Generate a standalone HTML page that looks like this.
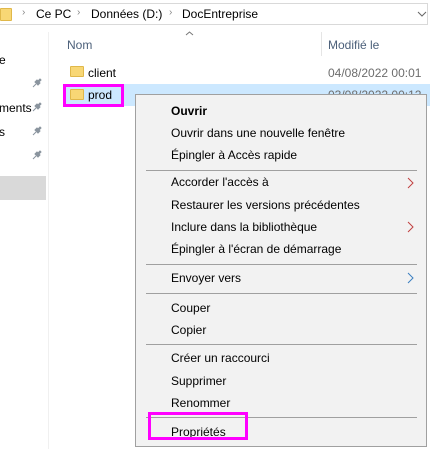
<!DOCTYPE html>
<html><head><meta charset="utf-8"><style>
*{margin:0;padding:0;box-sizing:border-box}
body{width:430px;height:449px;background:#fff;font-family:"Liberation Sans",sans-serif;font-size:12px;color:#000;position:relative;overflow:hidden}
.a{position:absolute;white-space:nowrap}
.fold{position:absolute;width:14px;height:11px;background:#f8d775;border:1px solid #e0b84a;border-radius:1px}
.menu{position:absolute;left:135px;top:94px;width:292px;height:353px;background:#f2f2f2;border:1px solid #a0a0a0}
.mi{position:absolute;left:35px;font-size:12px;line-height:14px}
.sep{position:absolute;left:10px;width:271px;height:1px;background:#a0a0a0}
.pin{position:absolute}
</style></head><body>
<div class="a" style="left:-2px;top:3px;width:430px;height:22px;border:1px solid #d9d9d9"></div>
<div class="fold" style="left:0;top:8px;width:12px;height:13px"></div>
<div class="a" style="left:22px;top:7px;color:#888;font-size:10px">›</div>
<div class="a" style="left:36px;top:7px">Ce PC</div>
<div class="a" style="left:77px;top:7px;color:#888;font-size:10px">›</div>
<div class="a" style="left:91px;top:7px">Données (D:)</div>
<div class="a" style="left:169px;top:7px;color:#888;font-size:10px">›</div>
<div class="a" style="left:182px;top:7px">DocEntreprise</div>
<svg class="a" style="left:417px;top:11px" width="10" height="6"><path d="M1 1L5 5L9 1" stroke="#666" fill="none"/></svg>
<div class="a" style="left:48px;top:32px;width:1px;height:417px;background:#f0f0f0"></div>
<div class="a" style="left:-1px;top:53px">e</div>
<div class="a" style="left:-1px;top:101px">ments</div>
<div class="a" style="left:-1px;top:125px">s</div>
<svg class="pin" style="left:32px;top:78px" width="10" height="10"><path d="M1 9L4 6M3 4L6 7L8 5L7 4L9 2L8 1L6 3L5 2Z" stroke="#8a949e" fill="#8a949e" stroke-width="1"/></svg>
<svg class="pin" style="left:32px;top:102px" width="10" height="10"><path d="M1 9L4 6M3 4L6 7L8 5L7 4L9 2L8 1L6 3L5 2Z" stroke="#8a949e" fill="#8a949e" stroke-width="1"/></svg>
<svg class="pin" style="left:32px;top:126px" width="10" height="10"><path d="M1 9L4 6M3 4L6 7L8 5L7 4L9 2L8 1L6 3L5 2Z" stroke="#8a949e" fill="#8a949e" stroke-width="1"/></svg>
<svg class="pin" style="left:32px;top:150px" width="10" height="10"><path d="M1 9L4 6M3 4L6 7L8 5L7 4L9 2L8 1L6 3L5 2Z" stroke="#8a949e" fill="#8a949e" stroke-width="1"/></svg>
<div class="a" style="left:0;top:176px;width:46px;height:24px;background:#d9d9d9"></div>
<svg class="a" style="left:185px;top:31px" width="9" height="5"><path d="M1 4L4.5 1L8 4" stroke="#777" fill="none"/></svg>
<div class="a" style="left:67px;top:38px;color:#4c607a">Nom</div>
<div class="a" style="left:321px;top:32px;width:1px;height:24px;background:#e5e5e5"></div>
<div class="a" style="left:328px;top:38px;color:#4c607a">Modifié le</div>
<div class="fold" style="left:70px;top:66px"></div>
<div class="a" style="left:88px;top:66px">client</div>
<div class="a" style="left:328px;top:66px;color:#6d6d6d">04/08/2022 00:01</div>
<div class="a" style="left:63px;top:84px;width:367px;height:22px;background:#cce8ff"></div>
<div class="a" style="left:328px;top:88px;color:#6d6d6d">03/08/2022 00:12</div>
<div class="fold" style="left:70px;top:89px"></div>
<div class="a" style="left:88px;top:88px">prod</div>
<div class="a" style="left:63px;top:84px;width:61px;height:23px;border:3px solid #ff00ff"></div>
<div class="menu">
<div class="mi" style="top:9px;font-weight:bold">Ouvrir</div>
<div class="mi" style="top:31px">Ouvrir dans une nouvelle fenêtre</div>
<div class="mi" style="top:53px">Épingler à Accès rapide</div>
<div class="sep" style="top:75px"></div>
<div class="mi" style="top:80px">Accorder l'accès à</div>
<div class="mi" style="top:103px">Restaurer les versions précédentes</div>
<div class="mi" style="top:125px">Inclure dans la bibliothèque</div>
<div class="mi" style="top:147px">Épingler à l'écran de démarrage</div>
<div class="sep" style="top:169px"></div>
<div class="mi" style="top:176px">Envoyer vers</div>
<div class="sep" style="top:198px"></div>
<div class="mi" style="top:206px">Couper</div>
<div class="mi" style="top:228px">Copier</div>
<div class="sep" style="top:249px"></div>
<div class="mi" style="top:256px">Créer un raccourci</div>
<div class="mi" style="top:279px">Supprimer</div>
<div class="mi" style="top:301px">Renommer</div>
<div class="sep" style="top:322px"></div>
<div class="mi" style="top:330px">Propriétés</div>
<svg class="a" style="left:271px;top:82px" width="7" height="12"><path d="M1 1L6 6L1 11" stroke="#c04040" fill="none"/></svg>
<svg class="a" style="left:271px;top:126px" width="7" height="12"><path d="M1 1L6 6L1 11" stroke="#c04040" fill="none"/></svg>
<svg class="a" style="left:271px;top:177px" width="7" height="12"><path d="M1 1L6 6L1 11" stroke="#3c7fc0" fill="none"/></svg>
</div>
<div class="a" style="left:148px;top:412px;width:100px;height:28px;border:3px solid #ff00ff"></div>
</body></html>
